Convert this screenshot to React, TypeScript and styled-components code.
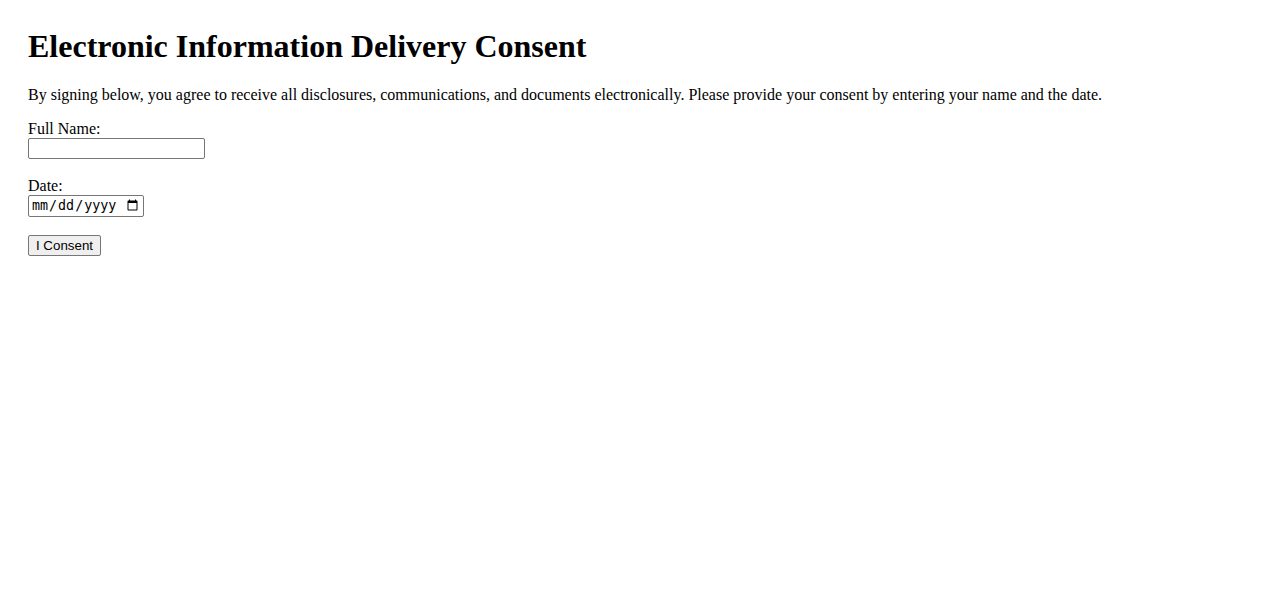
import React from 'react'
import { styled, createGlobalStyle } from 'styled-components'

const GlobalStyle = createGlobalStyle`
  body {
    margin: 0;
    font-family: "Liberation Serif", "Times New Roman", serif;
    font-size: 16px;
    color: #000;
    background: #fff;
  }
`

const App: React.FC = () => {
  return (
    <Page>
      <GlobalStyle />
      <Title>Electronic Information Delivery Consent</Title>
      <Intro>
        By signing below, you agree to receive all disclosures, communications, and documents electronically. Please provide your consent by entering your name and the date.
      </Intro>
      <form onSubmit={(e) => e.preventDefault()}>
        <Field>
          <Label htmlFor='fullName'>Full Name:</Label>
          <TextInput type='text' id='fullName' name='fullName' />
        </Field>
        <Field>
          <Label htmlFor='date'>Date:</Label>
          <DateInput type='date' id='date' name='date' />
        </Field>
        <ConsentButton type='submit'>I Consent</ConsentButton>
      </form>
    </Page>
  )
}

export default App

const Page = styled.div`
  padding: 28px 28px 28px;
`

const Title = styled.h1`
  font-size: 32px;
  font-weight: bold;
  margin: 0 0 21px;
`

const Intro = styled.p`
  margin: 0 0 16px;
`

const Field = styled.div`
  margin-bottom: 18px;
`

const Label = styled.label`
  display: block;
`

const TextInput = styled.input`
  box-sizing: border-box;
  width: 177px;
  height: 21px;
  font-size: 13.33px;
  border: 1px solid #767676;
  border-radius: 2px;
`

const DateInput = styled.input`
  box-sizing: border-box;
  width: 116px;
  height: 22px;
  font-size: 13.33px;
  border: 1px solid #767676;
  border-radius: 2px;
  padding: 1px 2px;
`

const ConsentButton = styled.button`
  box-sizing: border-box;
  width: 73px;
  height: 21px;
  padding: 0;
  font-family: Arial, "Liberation Sans", sans-serif;
  font-size: 13.33px;
  background: #efefef;
  border: 1px solid #767676;
  border-radius: 2px;
`
